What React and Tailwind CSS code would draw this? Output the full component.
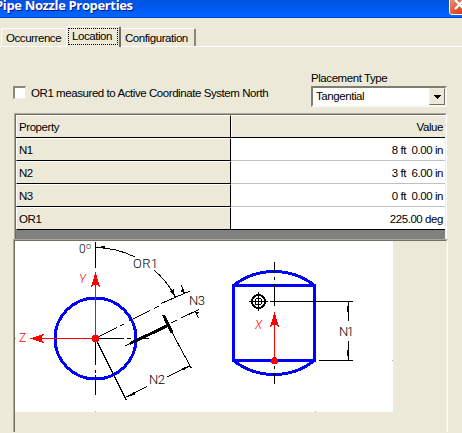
const FONT = "block font-['Liberation_Sans',Arial,sans-serif] text-[11.5px] leading-[13px] tracking-[-0.43px] whitespace-pre text-black";

const ROWS = [
  { name: 'N1', value: '8 ft  0.00 in' },
  { name: 'N2', value: '3 ft  6.00 in' },
  { name: 'N3', value: '0 ft  0.00 in' },
  { name: 'OR1', value: '225.00 deg' },
];

function TitleBar() {
  return (
    <div className="flex h-[18px] shrink-0 justify-between overflow-hidden bg-linear-to-b from-[#0054e0] via-[#005cf6] via-60% to-[#0066ff] border-b border-[#0043cf]">
      <div className="-ml-[5px] -mt-[4px] font-['Open_Sans','Noto_Sans',sans-serif] text-[13px] leading-[18px] font-bold tracking-[-0.35px] whitespace-pre text-white [text-shadow:1px_1px_0_#0a1883]">
        Pipe Nozzle Properties
      </div>
      <div className="-mt-[6px] -mr-[8px] h-[21px] w-[21px] shrink-0 rounded-[3px] border border-white bg-linear-to-br from-[#f0a088] via-[#e25a33] to-[#c8360c]">
        <svg width="19" height="19" viewBox="0 0 19 19" className="block">
          <path d="M5 5L14 14M14 5L5 14" stroke="#fff" strokeWidth="2.4" />
        </svg>
      </div>
    </div>
  );
}

function Tabs() {
  return (
    <div className="flex h-[29px] shrink-0 items-end border-b border-white pl-px">
      <div className="flex h-[18px] w-[65px] rounded-tl-[2px] border-t border-l border-white pt-[3px] pl-[4px]">
        <span className={FONT}>Occurrence</span>
      </div>
      <div className="z-10 -mb-px flex h-[21px] w-[55px] rounded-t-[2px] border-t border-r-2 border-l border-t-white border-r-[#716f64] border-l-white bg-[#ece9d8] p-px">
        <div className="h-[17px] w-[50px] border border-dotted border-black pt-px pl-[3px]">
          <span className={FONT}>Location</span>
        </div>
      </div>
      <div className="flex h-[18px] w-[75px] rounded-tr-[2px] border-t border-r-2 border-t-white border-r-[#8b887a] pt-[3px] pl-[4px]">
        <span className={FONT}>Configuration</span>
      </div>
    </div>
  );
}

function Options() {
  return (
    <div className="flex h-[66px] shrink-0 justify-between pr-[15px] pl-[13px]">
      <div className="flex pt-[39px]">
        <div className="h-[13px] w-[13px] shrink-0 border-t-2 border-r border-b border-l-2 border-t-[#8b887a] border-r-[#f1efe2] border-b-[#f1efe2] border-l-[#8b887a] bg-white" />
        <span className={`${FONT} ml-[5px] pt-px`}>OR1 measured to Active Coordinate System North</span>
      </div>
      <div className="w-[136px] shrink-0 pt-[25px]">
        <div className={`${FONT} h-[14px]`}>Placement Type</div>
        <div className="flex h-[21px] w-[136px] justify-between border-t-2 border-r-2 border-b-2 border-l-2 border-t-[#807d70] border-r-[#f8f7f0] border-b-[#f8f7f0] border-l-[#807d70] bg-white">
          <span className={`${FONT} pt-[2px] pl-[3px]`}>Tangential</span>
          <div className="flex h-[17px] w-[16px] items-center justify-center border border-t-[#f1efe2] border-r-[#716f64] border-b-[#716f64] border-l-[#f1efe2] bg-[#ece9d8]">
            <svg width="7" height="4" viewBox="0 0 7 4" shapeRendering="crispEdges">
              <path d="M0 0H7L3.5 4Z" />
            </svg>
          </div>
        </div>
      </div>
    </div>
  );
}

function PropertyTable() {
  return (
    <div className="ml-[14px] h-[126px] w-[433px] shrink-0 border-t border-r border-l border-t-[#aca899] border-r-white border-l-[#aca899]">
      <div className="h-full border-t border-r border-l border-t-[#716f64] border-r-[#f1efe2] border-l-[#716f64] bg-[#808080]">
        <div className="flex h-[23px] border-b border-black bg-[#ece9d8]">
          <div className="w-[215px] border-t border-r border-l border-t-white border-r-black border-l-white pt-[5px] pl-[2px]">
            <div className={FONT}>Property</div>
          </div>
          <div className="flex grow justify-end border-t border-l border-white pt-[5px] pr-[2px]">
            <span className={FONT}>Value</span>
          </div>
        </div>
        {ROWS.map((row, i) => (
          <div key={row.name} className="flex h-[23px]">
            <div className="w-[215px] border-t border-r border-b border-l border-t-white border-r-black border-b-black border-l-white bg-[#ece9d8] pt-[5px] pl-[2px]">
              <div className={FONT}>{row.name}</div>
            </div>
            <div className={`flex grow justify-end border-b bg-white pt-[6px] pr-[2px] ${i === ROWS.length - 1 ? 'border-black' : 'border-[#c0c0c0]'}`}>
              <span className={FONT}>{row.value}</span>
            </div>
          </div>
        ))}
      </div>
    </div>
  );
}

function Diagram() {
  return (
    <svg
      width="378"
      height="171"
      viewBox="15 241 378 171"
      className="block bg-white font-['Roboto','Liberation_Sans',Arial,sans-serif] text-[13px] font-light"
      shapeRendering="crispEdges"
      fill="none"
    >
      {/* plan view: centre lines */}
      <g stroke="#000">
        <path d="M95.5 242V268M95.5 342V365M95.5 370V373M95.5 375V395" />
        <path d="M95 338.5H124M127 338.5H131M135 338.5H149" />
        <path d="M95.5 338.5L117 327.5M120 326L124 324M129 321L150 310.5M154 308.5L159 306M161 303.5L190 291" />
        <path d="M171 323L177 320M181 318L199 309.5" />
        <path d="M95.5 338.5L126.5 400.5M168 325L191.5 368.5" />
        <path d="M126.5 397L147 386.5M167 377L190.5 365.5" />
        <path d="M96 247.5A91 91 0 0 1 135 257M154 270A91 91 0 0 1 175.5 297" />
        <path d="M181.5 285L184 293M198.5 318L195 311" />
      </g>
      <g fill="#000">
        <path d="M96 247L105 246V249ZM175.5 298L170 291L173.5 289Z" />
        <path d="M185 294L180.5 291L184 289ZM194 311L199 312.5L196.5 315Z" />
        <path d="M127 397L134 392L135.5 394.5ZM190 365.5L182 368L183.5 370.5Z" />
      </g>
      <circle cx="95.5" cy="338.5" r="40.5" stroke="#00f" strokeWidth="3" />
      <path d="M125 346L131 343" stroke="#000" />
      <path d="M130 343.5L168 325.5M163.5 315L172 332.5" stroke="#000" strokeWidth="3" />
      <path d="M95.5 338.5V284M95.5 338.5H40" stroke="#f00" />
      <path d="M95.5 272L100 287L95.5 284L91 287ZM30 338.5L44 334L41 338.5L44 343Z" fill="#f00" />
      <circle cx="95.5" cy="338.5" r="3.7" fill="#f00" />

      {/* elevation view */}
      <path
        d="M233.5 285.5H314.5V360.5H233.5ZM233.5 285.5A65.6 65.6 0 0 1 314.5 285.5M233.5 360.5A65.6 65.6 0 0 0 314.5 360.5"
        stroke="#00f"
        strokeWidth="3"
      />
      <g stroke="#000">
        <path d="M274.5 262V273M274.5 277V280M274.5 284V306M274.5 366V369M274.5 373V384" />
        <path d="M270 301.5H353M319 360.5H353M348.5 301V321M348.5 341V360" />
        <path d="M347.5 306V312M347.5 350V356" />
        <path d="M249 301.5H268M258.5 292V311" />
        <circle cx="258.5" cy="301.5" r="3.5" />
        <circle cx="258.5" cy="301.5" r="6.5" strokeWidth="2" />
      </g>
      <path d="M274.5 360V324" stroke="#f00" />
      <path d="M274.5 312L279 327L274.5 324L270 327Z" fill="#f00" />
      <circle cx="274.5" cy="360.5" r="3.5" fill="#f00" />

      {/* image frame ticks */}
      <path d="M15 338.5H16M95 411.5H96M315 411.5H316M392 360.5H393" stroke="#b0b0b0" />

      <g fill="#000">
        <text x="79" y="253" className="text-[12px]">0</text>
        <text x="86" y="249" className="text-[9px]">o</text>
        <text x="133" y="268" textLength="25">OR1</text>
        <text x="189" y="305" textLength="16">N3</text>
        <text x="149" y="384" textLength="16">N2</text>
        <text x="339" y="336" textLength="15">N1</text>
      </g>
      <g fill="#f00" className="text-[12px]">
        <text x="79" y="283" fontStyle="italic">Y</text>
        <text x="19" y="342">Z</text>
        <text x="255" y="329" fontStyle="italic">X</text>
      </g>
    </svg>
  );
}

export default function App() {
  return (
    <div className="flex h-[433px] w-[462px] flex-col overflow-hidden bg-[#ece9d8]">
      <TitleBar />
      <Tabs />
      <Options />
      <PropertyTable />
      <div className="ml-[13px] h-[193px] w-[435px] shrink-0 border-t border-r border-l border-t-[#aca899] border-r-white border-l-[#aca899]">
        <div className="h-full border-t border-r border-l border-t-[#716f64] border-r-[#f1efe2] border-l-[#716f64]">
          <Diagram />
        </div>
      </div>
    </div>
  );
}
